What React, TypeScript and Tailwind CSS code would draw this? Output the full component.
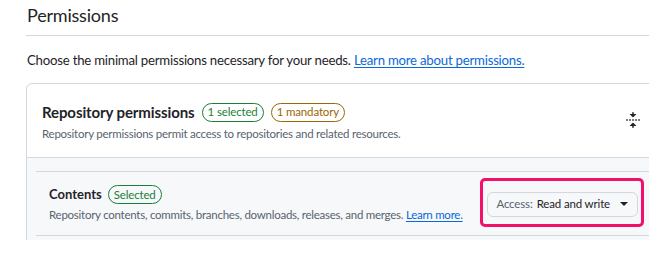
import { ReactNode } from "react";

function FoldIcon() {
  return (
    <svg width="16" height="16" viewBox="0 0 16 16" fill="#1f2328">
      <path d="M10.896 2H8.75V.75a.75.75 0 0 0-1.5 0V2H5.104a.25.25 0 0 0-.177.427l2.896 2.896a.25.25 0 0 0 .354 0l2.896-2.896A.25.25 0 0 0 10.896 2ZM8.75 15.25a.75.75 0 0 1-1.5 0V14H5.104a.25.25 0 0 1-.177-.427l2.896-2.896a.25.25 0 0 1 .354 0l2.896 2.896a.25.25 0 0 1-.177.427H8.75v1.25Zm-6.5-6.5a.75.75 0 0 0 0-1.5h-.5a.75.75 0 0 0 0 1.5h.5ZM6 8a.75.75 0 0 1-.75.75h-.5a.75.75 0 0 1 0-1.5h.5A.75.75 0 0 1 6 8Zm2.25.75a.75.75 0 0 0 0-1.5h-.5a.75.75 0 0 0 0 1.5h.5ZM12 8a.75.75 0 0 1-.75.75h-.5a.75.75 0 0 1 0-1.5h.5A.75.75 0 0 1 12 8Zm2.25.75a.75.75 0 0 0 0-1.5h-.5a.75.75 0 0 0 0 1.5h.5Z" />
    </svg>
  );
}

function Badge({ color, children }: { color: "green" | "orange"; children: ReactNode }) {
  const cls =
    color === "green"
      ? "border-[#1a7f37] text-[#1a7f37]"
      : "border-[#9a6700] text-[#9a6700]";
  return (
    <span className={`inline-flex items-center h-[19px] px-[5px] rounded-full border text-[11.5px] tracking-[-0.15px] leading-none ${cls}`}>
      {children}
    </span>
  );
}

export default function App() {
  return (
    <div
      className="h-[240px] w-[649px] overflow-hidden bg-white text-[#1f2328]"
      style={{ fontFamily: 'Lato, "Noto Sans", sans-serif' }}
    >
      <div className="ml-[26px] w-[640px]">
        {/* Title */}
        <div className="pt-[2px] pb-[7px] border-b border-[#d1d9e0]">
          <h2 className="text-[18px] leading-[26px] tracking-[-0.2px] font-normal pl-[1px]">Permissions</h2>
        </div>

        <p className="mt-[14px] text-[13.2px] leading-[21px] tracking-[-0.22px] pl-[1px]">
          Choose the minimal permissions necessary for your needs.{" "}
          <a className="text-[#0969da] underline underline-offset-2">Learn more about permissions.</a>
        </p>

        {/* Card */}
        <div className="mt-[12px] w-[630px] border border-[#d1d9e0] rounded-[6px] bg-[#f6f8fa]">
          <div className="flex items-center bg-white rounded-t-[6px] border-b border-[#d1d9e0] px-[15px] pt-[16px] pb-[14px]">
            <div className="flex-1">
              <div className="flex items-center gap-[7px] h-[24px]">
                <span className="text-[15px] tracking-[-0.1px] font-bold">Repository permissions</span>
                <Badge color="green">1 selected</Badge>
                <Badge color="orange">1 mandatory</Badge>
              </div>
              <p className="text-[11.5px] leading-[18px] tracking-[-0.25px] text-[#59636e] mt-[1px]">
                Repository permissions permit access to repositories and related resources.
              </p>
            </div>
            <div className="mr-[-1px] mt-[-4px]">
              <FoldIcon />
            </div>
          </div>

          <div className="pl-[9px] pt-[13px] pb-[24px]">
            <div className="relative flex items-center border-y border-[#d1d9e0] pl-[13px] pr-[17px] h-[65px]">
              <div className="flex-1">
                <div className="flex items-center gap-[6px] h-[22px]">
                  <span className="text-[13px] font-bold">Contents</span>
                  <Badge color="green">Selected</Badge>
                </div>
                <p className="text-[11.5px] leading-[18px] tracking-[-0.26px] text-[#59636e]">
                  Repository contents, commits, branches, downloads, releases, and merges.{" "}
                  <a className="text-[#0969da] underline underline-offset-2">Learn more.</a>
                </p>
              </div>
              <button className="flex items-center h-[25px] mt-[1px] pl-[8px] pr-[9px] rounded-[6px] border border-[#d1d9e0] bg-[#f6f8fa] text-[11.5px] tracking-[-0.15px]">
                <span className="text-[#59636e]">Access:</span>
                <span className="ml-[4px]">Read and write</span>
                <svg className="ml-[10px]" width="8" height="4" viewBox="0 0 8 4" fill="#1f2328">
                  <path d="M0 0h8L4 4z" />
                </svg>
              </button>
              {/* annotation highlight */}
              <div className="absolute left-[444px] top-[6px] w-[164px] h-[49px] border-[3px] border-[#f2106a] rounded-[5px]" />
            </div>
          </div>
        </div>
      </div>
    </div>
  );
}
